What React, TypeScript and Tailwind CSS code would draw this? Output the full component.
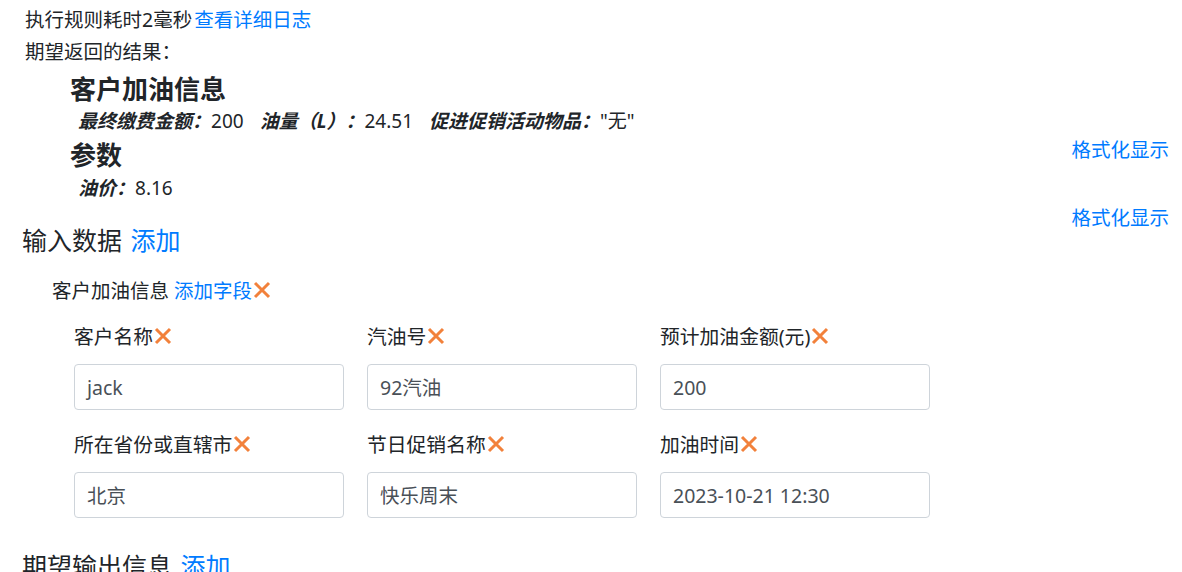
import React from 'react';

const font = "font-['Noto_Sans','Noto_Sans_CJK_SC',sans-serif]";

function RemoveIcon() {
  return (
    <svg width="20" height="20" viewBox="0 0 20 20" className="inline-block align-[-2px]">
      <path d="M3 3 L17 17 M17 3 L3 17" stroke="#f2813b" strokeWidth="3" fill="none" />
    </svg>
  );
}

const resultFields = [
  { label: '最终缴费金额：', value: '200' },
  { label: '油量（L）：', value: '24.51' },
  { label: '促进促销活动物品：', value: '"无"' },
];

const inputs = [
  { label: '客户名称', value: 'jack' },
  { label: '汽油号', value: '92汽油' },
  { label: '预计加油金额(元)', value: '200' },
  { label: '所在省份或直辖市', value: '北京' },
  { label: '节日促销名称', value: '快乐周末' },
  { label: '加油时间', value: '2023-10-21 12:30' },
];

export default function App() {
  return (
    <div className={`min-h-[572px] bg-white text-[#212529] ${font} pl-[22px] pr-[13px] pt-[4px] overflow-hidden`}>
      {/* Run summary */}
      <div className="ml-[3px] text-[19.5px] leading-[32px]">
        执行规则耗时2毫秒<a className="ml-[2px] text-[#007bff]">查看详细日志</a>
      </div>
      <div className="ml-[3px] text-[19.5px] leading-[32px]">期望返回的结果：</div>

      {/* Expected result */}
      <div className="ml-[48px]">
        <div className="mt-[4px] text-[26px] font-bold leading-[34px]">客户加油信息</div>
        <div className="ml-[8px] flex gap-[16px] text-[19px] leading-[30px]">
          {resultFields.map((f) => (
            <span key={f.label}>
              <span className="font-bold italic">{f.label}</span>
              {f.value}
            </span>
          ))}
        </div>
      </div>
      <div className="mt-[2px] flex items-start justify-between">
        <div className="ml-[48px] text-[26px] font-bold leading-[34px]">参数</div>
        <a className="text-[19.5px] leading-[24px] text-[#007bff]">格式化显示</a>
      </div>
      <div className="ml-[56px] mt-[1px] text-[19px] leading-[30px]">
        <span className="font-bold italic">油价：</span>8.16
      </div>
      <div className="mt-[5px] flex h-[20px] justify-end text-[19.5px] leading-[20px]">
        <a className="text-[#007bff]">格式化显示</a>
      </div>

      {/* Input data */}
      <div className="text-[25px] leading-[24px]">
        输入数据 <a className="ml-[2px] text-[#007bff]">添加</a>
      </div>
      <div className="ml-[30px] mt-[24px] text-[19.5px] leading-[30px]">
        客户加油信息 <a className="text-[#007bff]">添加字段</a>
        <RemoveIcon />
      </div>
      <div className="ml-[52px] mt-[16px] grid grid-cols-[270px_270px_270px] gap-x-[23px] gap-y-[20px]">
        {inputs.map((item) => (
          <div key={item.label}>
            <div className="text-[19.8px] leading-[30px]">
              {item.label}
              <RemoveIcon />
            </div>
            <div className="mt-[12px] flex h-[46px] items-center rounded-[4px] border border-[#ced4da] px-[12px] pt-[2px] text-[19.5px] text-[#495057]">
              {item.value}
            </div>
          </div>
        ))}
      </div>

      {/* Expected output */}
      <div className="mt-[31px] text-[25px] leading-[34px]">
        期望输出信息 <a className="ml-[2px] text-[#007bff]">添加</a>
      </div>
    </div>
  );
}
